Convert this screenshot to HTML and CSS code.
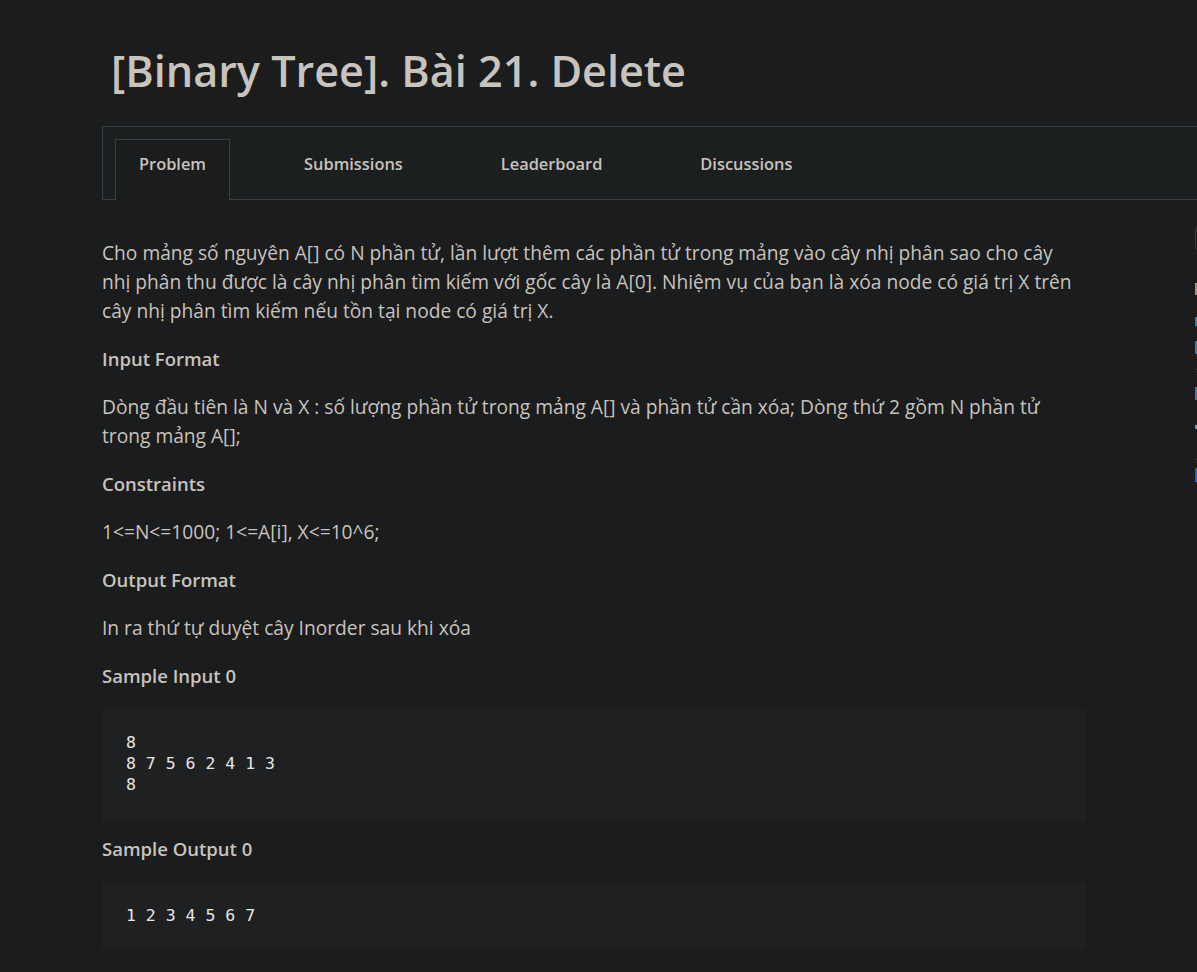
FILE: index.html
```html
<!DOCTYPE html>
<html lang="vi">
<head>
<meta charset="utf-8">
<title>[Binary Tree]. Bài 21. Delete</title>
<link rel="stylesheet" href="styles.css">
</head>
<body>
<div class="page">
  <h1 class="title">[Binary Tree]. Bài 21. Delete</h1>
  <nav class="tabs">
    <a class="tab tab-active">Problem</a>
    <a class="tab">Submissions</a>
    <a class="tab">Leaderboard</a>
    <a class="tab">Discussions</a>
  </nav>
  <div class="body">
    <main class="content">
      <p class="text">Cho mảng số nguyên A[] có N phần tử, lần lượt thêm các phần tử trong mảng vào cây nhị phân sao cho cây nhị phân thu được là cây nhị phân tìm kiếm với gốc cây là A[0]. Nhiệm vụ của bạn là xóa node có giá trị X trên cây nhị phân tìm kiếm nếu tồn tại node có giá trị X.</p>
      <h2 class="heading">Input Format</h2>
      <p class="text">Dòng đầu tiên là N và X : số lượng phần tử trong mảng A[] và phần tử cần xóa; Dòng thứ 2 gồm N phần tử trong mảng A[];</p>
      <h2 class="heading">Constraints</h2>
      <p class="text">1&lt;=N&lt;=1000; 1&lt;=A[i], X&lt;=10^6;</p>
      <h2 class="heading">Output Format</h2>
      <p class="text">In ra thứ tự duyệt cây Inorder sau khi xóa</p>
      <h2 class="heading">Sample Input 0</h2>
      <pre class="code code-tall">8
8 7 5 6 2 4 1 3
8</pre>
      <h2 class="heading">Sample Output 0</h2>
      <pre class="code">1 2 3 4 5 6 7</pre>
    </main>
    <aside class="sidebar">
      <div class="side-box"></div>
      <div class="side-label"></div>
      <div class="side-link"></div>
      <div class="side-link side-link-tall"></div>
      <div class="side-rule"></div>
      <div class="side-link side-link-tall"></div>
      <div class="side-mark"></div>
      <div class="side-rule side-rule-2"></div>
      <div class="side-button"></div>
    </aside>
  </div>
</div>
</body>
</html>
```
FILE: styles.css
```css
html, body {
  margin: 0;
  padding: 0;
  background: #1b1c1e;
  overflow: hidden;
}

body {
  font-family: "Open Sans", "Noto Sans", sans-serif;
  color: #c8c3bc;
}

.page {
  padding: 44px 0 0 102px;
  width: 1400px;
}

.title {
  margin: 0 0 28px 9px;
  font-size: 43.2px;
  line-height: 54px;
  font-weight: 600;
  color: #c8c3bc;
  letter-spacing: 0;
}

.tabs {
  display: flex;
  align-items: flex-end;
  height: 60px;
  padding: 12px 0 0 12px;
  background: #1c1f20;
  border: 1px solid #3a3e41;
  border-right: none;
}

.tab {
  display: block;
  height: 61px;
  box-sizing: border-box;
  padding: 12px 23px 0;
  margin-right: 50px;
  margin-bottom: -1px;
  border: 1px solid transparent;
  border-bottom: none;
  font-size: 16.4px;
  line-height: 24px;
  font-weight: 600;
  color: #c8c3bc;
}

.tab-active {
  background: #1b1c1e;
  border-color: #3a3e41;
}

.body {
  display: flex;
  align-items: flex-start;
}

.content {
  width: 984px;
  padding-top: 38px;
}

.text,
.heading {
  margin: 0 0 19px;
  line-height: 29px;
}

.text {
  font-size: 19.2px;
  font-weight: 400;
}

.heading {
  font-size: 18.5px;
  font-weight: 600;
}

.code {
  margin: 0 0 12px;
  padding: 23px 24px 23px;
  background: #1f2022;
  color: #e8e6e3;
  font-family: "DejaVu Sans Mono", "Liberation Mono", monospace;
  font-size: 16.5px;
  line-height: 21px;
}

.code-tall {
  padding-bottom: 27px;
}

.sidebar {
  margin-left: 109px;
  width: 250px;
  padding-top: 26px;
  display: flex;
  flex-direction: column;
}

.side-box {
  height: 22px;
  width: 120px;
  border: 1px solid #3a3e41;
  border-radius: 3px;
  margin-bottom: 33px;
}

.side-label {
  height: 12px;
  width: 8px;
  border-left: 2px solid #9a948c;
  margin-bottom: 22px;
}

.side-link {
  height: 9px;
  width: 100px;
  background: #3d7fa8;
  margin-bottom: 15px;
}

.side-link-tall {
  height: 13px;
}

.side-rule {
  height: 1px;
  background: #3a3e41;
  margin: 0 0 17px;
}

.side-mark {
  height: 4px;
  width: 40px;
  background: #8a9aa6;
  margin: 10px 0 30px;
}

.side-rule-2 {
  margin-bottom: 8px;
}

.side-button {
  height: 14px;
  width: 120px;
  background: #1f63d4;
}
```
